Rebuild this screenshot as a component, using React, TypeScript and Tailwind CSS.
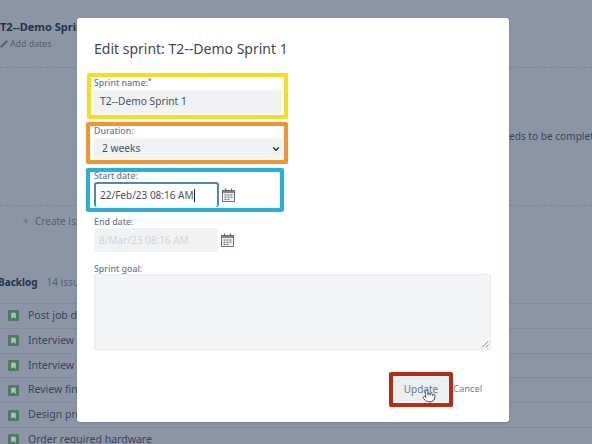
import React from 'react';
import { ChevronDown, Pencil, Plus, Pointer, Bookmark } from 'lucide-react';

const backlogRows = [
  'Post job description',
  'Interview round one',
  'Interview round two',
  'Review final candidates',
  'Design presentation',
  'Order required hardware',
];

const CalendarIcon = () => (
  <svg width="13" height="14" viewBox="0 0 13 14" className="shrink-0 text-[#5f6772]">
    <rect x="0.5" y="2.5" width="12" height="11" fill="#eef0f2" stroke="currentColor" strokeWidth="0.9" />
    <rect x="0.5" y="2.5" width="12" height="2.5" fill="currentColor" opacity="0.75" />
    <path d="M3.5 0.5v3M9.5 0.5v3" stroke="currentColor" strokeWidth="1.2" />
    <path d="M2.5 7h2M5.5 7h2M8.5 7h2M2.5 9.2h2M5.5 9.2h2M8.5 9.2h2M2.5 11.4h2M5.5 11.4h2" stroke="currentColor" strokeWidth="1" />
  </svg>
);

const Label: React.FC<{ children: React.ReactNode }> = ({ children }) => (
  <div className="text-[8.8px] leading-[12px] font-medium text-[#6b778c]">{children}</div>
);

const Backdrop = () => (
  <div className="h-[444px] overflow-hidden bg-[#8b95a5] text-[#3a4560] font-['Noto_Sans',sans-serif]">
    <div className="pt-[19px] text-[11px] leading-[15px] font-bold text-[#26334f] whitespace-nowrap">T2--Demo Sprint 1</div>
    <div className="mt-[3px] flex items-center gap-[2px] text-[8.8px] leading-[14px] text-[#566178]">
      <Pencil size={8} fill="currentColor" />
      Add dates
    </div>
    <div className="mt-[16px] border-t border-dashed border-[#7b8597]" />
    <div className="mt-[60px] whitespace-nowrap pl-[509px] text-[10.1px] leading-[16px]">eds to be complet</div>
    <div className="mt-[61px] border-t border-dashed border-[#7b8597]" />
    <div className="mt-[8px] ml-[22px] flex items-center gap-[5px] text-[10px] leading-[14px] text-[#566178]">
      <Plus size={8} />
      Create issue
    </div>
    <div className="mt-[47px] flex items-center gap-[9px] text-[10px] leading-[14px] whitespace-nowrap">
      <span className="-ml-[2px] font-bold text-[#26334f]">Backlog</span>
      <span className="text-[#566178]">14 issues</span>
    </div>
    <div className="mt-[14px] border-t border-[#818b9c]">
      {backlogRows.map(row => (
        <div key={row} className="flex h-[24.8px] items-center gap-[9px] border-b border-[#818b9c] pl-[8px] text-[10.5px] whitespace-nowrap">
          <span className="flex h-[11px] w-[11px] items-center justify-center rounded-[1px] bg-[#4f7a62]">
            <Bookmark size={7} className="text-[#a9c4b3]" fill="currentColor" />
          </span>
          {row}
        </div>
      ))}
    </div>
  </div>
);

const EditSprintDialog = () => (
  <div className="absolute left-[77px] top-[18px] h-[404px] w-[432px] rounded-[3px] bg-white px-[17px] font-['Noto_Sans',sans-serif] shadow-sm">
    <h2 className="pt-[20px] text-[14px] leading-[21px] text-[#3f4856]">Edit sprint: T2--Demo Sprint 1</h2>

    <div className="mt-[14px] -ml-[7px] h-[46px] w-[201px] rounded-[2px] border-[4px] border-[#f6dd1e] pl-[3px] pr-[2px]">
      <Label>
        Sprint name:<sup className="text-[#b04632]">*</sup>
      </Label>
      <div className="mt-[1px] flex h-[24px] items-center rounded-[2px] bg-[#f1f2f4] pl-[6px] text-[10.2px] text-[#48515f]">T2--Demo Sprint 1</div>
    </div>

    <div className="mt-[3px] -ml-[8px] h-[42px] w-[202px] rounded-[2px] border-[4px] border-[#f5932f] pl-[4px] pr-[2px]">
      <div className="-mt-[1px]">
        <Label>Duration:</Label>
      </div>
      <div className="mt-[1px] flex h-[21px] items-center justify-between rounded-[2px] bg-[#f1f2f4] pl-[8px] pr-[1px] text-[10.2px] text-[#48515f]">
        2 weeks
        <ChevronDown size={10} strokeWidth={3} className="text-[#2b3240]" />
      </div>
    </div>

    <div className="mt-[4px] -ml-[8px] h-[44px] w-[198px] overflow-hidden rounded-[2px] border-[4px] border-[#27aee2] pl-[4px]">
      <div className="-mt-[2px]">
        <Label>Start date:</Label>
      </div>
      <div className="flex items-center gap-[3px]">
        <div className="flex h-[25px] w-[125px] items-center rounded-[3px] border-2 border-b-0 border-[#4c86bd] pl-[4px] text-[10px] text-[#48515f]">
          22/Feb/23 08:16 AM<span className="h-[13px] w-px bg-[#222]" />
        </div>
        <CalendarIcon />
      </div>
    </div>

    <div className="mt-[4px]">
      <Label>End date:</Label>
      <div className="flex items-center gap-[3px]">
        <div className="flex h-[24px] w-[124px] items-center rounded-[2px] bg-[#f1f2f4] pl-[5px] text-[10px] text-[#d3d6db]">8/Mar/23 08:16 AM</div>
        <CalendarIcon />
      </div>
    </div>

    <div className="mt-[11px]">
      <Label>Sprint goal:</Label>
      <div className="relative -mt-[1px] h-[76px] w-[397px] rounded-[2px] border border-[#e9ebee] bg-[#f3f4f6]">
        <svg width="8" height="8" viewBox="0 0 8 8" className="absolute bottom-[1px] right-[1px] text-[#777]">
          <path d="M1 7.5L7.5 1M4.5 7.5L7.5 4.5" stroke="currentColor" strokeWidth="0.8" />
        </svg>
      </div>
    </div>

    <div className="mt-[22px] flex items-center justify-end pr-[10px]">
      <div className="relative h-[35px] w-[64px] rounded-[2px] border-[4px] border-[#bd2a13] p-[1px]">
        <div className="flex h-full items-center justify-center rounded-[2px] bg-[#eceef1] text-[10px] text-[#6b7687]">Update</div>
        <Pointer size={14} strokeWidth={1.4} fill="white" className="absolute left-[29px] top-[13px] text-[#333]" />
      </div>
      <span className="w-[29px] whitespace-nowrap text-[9.4px] text-[#5d7ea8]">Cancel</span>
    </div>
  </div>
);

export default function App() {
  return (
    <div className="relative h-[444px] w-[592px] overflow-hidden">
      <Backdrop />
      <EditSprintDialog />
    </div>
  );
}
